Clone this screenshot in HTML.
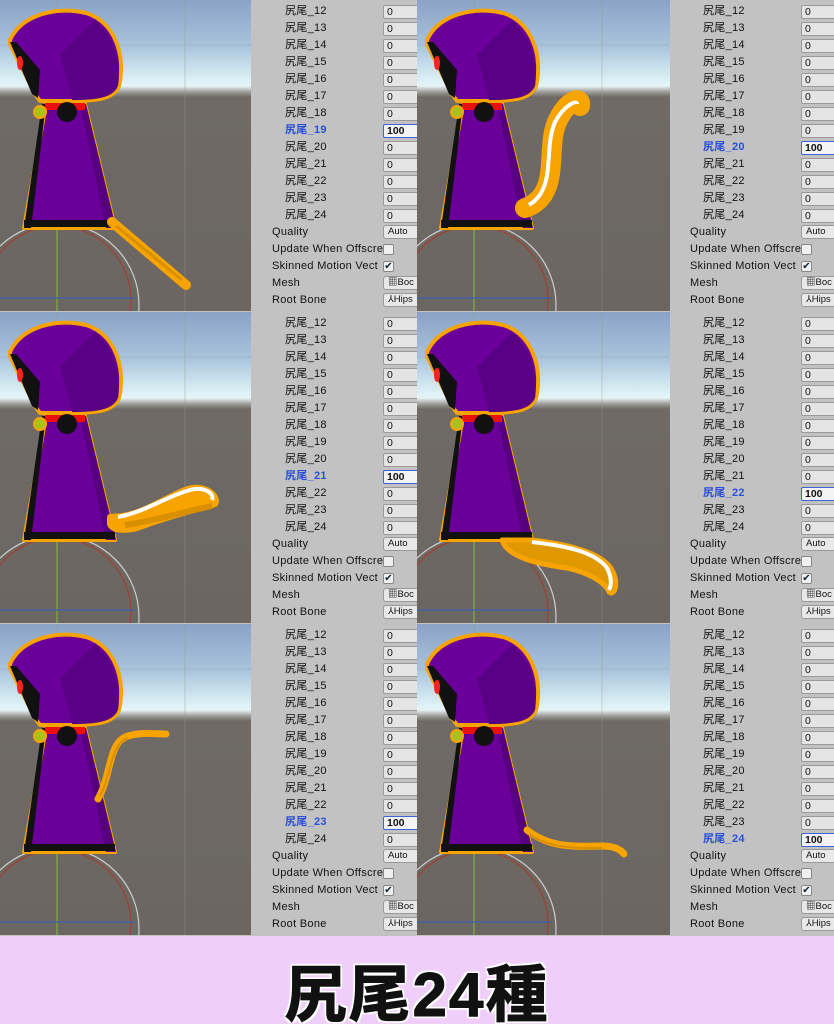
<!DOCTYPE html>
<html><head><meta charset="utf-8"><style>
*{margin:0;padding:0;box-sizing:border-box}
html,body{width:834px;height:1024px;overflow:hidden}
body{position:relative;background:#c2c2c2;font-family:"Liberation Sans","Noto Sans CJK JP",sans-serif}
.vp{position:absolute;overflow:hidden;background:linear-gradient(#8aa2c6 0px,#a9c2db 45px,#d8eef4 78px,#e6f4f6 86px,#9e9c98 92px,#6f6a66 97px,#6b6662 312px)}
.vp svg{position:absolute;left:0;top:0}
.ins{position:absolute;background:#c2c2c2;overflow:hidden;font-size:11px;color:#111}
.r{position:absolute;height:17px;line-height:17px;white-space:nowrap;letter-spacing:.3px}
.l{left:33px}.q{left:20px}
.b{position:absolute;left:131px;width:40px;height:14px;background:#e4e4e4;border:1px solid #9a9a9a;border-radius:2px;font-size:10.5px;line-height:12px;padding-left:3px}
.hl{color:#2b50d8;font-weight:bold}
.hb{border:1px solid #3d63d8;font-weight:bold;background:#f4f4f4}
.btn{position:absolute;left:131px;width:40px;height:14px;background:#e8e8e8;border:1px solid #999;border-radius:3px;font-size:9.5px;line-height:12px;padding-left:4px}
.cb{position:absolute;left:131px;width:11px;height:11px;background:#f0f0f0;border:1px solid #888;border-radius:2px;font-size:10px;line-height:9px;text-align:center;color:#123}
.banner{position:absolute;left:0;top:936px;width:834px;height:88px;background:#efcffa}
.banner div{position:absolute;left:0;width:834px;top:8px;text-align:center;font-size:62px;font-weight:bold;color:#111;letter-spacing:2px;-webkit-text-stroke:1px #111;text-shadow:0 0 4px #fff,2px 2px 0 #fff,-2px -2px 0 #fff,2px -2px 0 #fff,-2px 2px 0 #fff}
</style></head><body>
<svg width="0" height="0" style="position:absolute"><defs>
<g id="ch">
<line x1="57" y1="0" x2="57" y2="312" stroke="#8f9a92" stroke-width="1" opacity=".5"/>
<line x1="185" y1="0" x2="185" y2="312" stroke="#8f9a92" stroke-width="1" opacity=".4"/>
<line x1="0" y1="45" x2="252" y2="45" stroke="#8f9a92" stroke-width="1" opacity=".3"/>
<circle cx="57" cy="305" r="82" fill="none" stroke="#d0d0d0" stroke-width="1.2"/>
<circle cx="57" cy="300" r="74" fill="none" stroke="#a04030" stroke-width="1.2"/>
<line x1="57" y1="222" x2="57" y2="312" stroke="#7fb040" stroke-width="1.2"/>
<line x1="0" y1="298" x2="135" y2="298" stroke="#4060b0" stroke-width="1.2"/>
<path d="M46,104 L85,104 L115,228 L24,228 Z" fill="#6a0099" stroke="#f7a400" stroke-width="4" stroke-linejoin="round"/>
<path d="M46,104 L42,104 L24,228 L31,228 Z" fill="#111"/>
<path d="M80,104 L86,104 L116,228 L106,228 Z" fill="#56007f"/>
<rect x="24" y="220" width="91" height="7" fill="#111"/>
<path d="M10,40 C22,14 58,6 86,13 C116,22 126,58 119,86 C114,98 100,101 72,101 L40,101 L35,94 L10,44 Z" fill="#6a0099" stroke="#f7a400" stroke-width="4" stroke-linejoin="round"/>
<path d="M60,55 L95,20 C112,35 122,60 118,86 C113,97 100,100 72,100 Z" fill="#5a0086"/>
<path d="M10,42 L16,42 L40,70 L38,98 L32,94 Z" fill="#111"/>
<ellipse cx="20" cy="63" rx="3" ry="7" fill="#ff2020"/>
<rect x="45" y="103" width="40" height="7" fill="#e81010"/>
<circle cx="67" cy="112" r="10" fill="#111"/>
<circle cx="40" cy="112" r="6" fill="#a8c020" stroke="#f7a400" stroke-width="2"/>
</g>
</defs></svg>

<div class="vp" style="left:0;top:0;width:251px;height:311px"><svg width="251" height="312"><use href="#ch"/><path d="M112,222 L186,285" stroke="#f7a400" stroke-width="10" stroke-linecap="round"/><path d="M116,226 L182,280" stroke="#d89000" stroke-width="3"/></svg></div>
<div class="vp" style="left:417px;top:0;width:253px;height:311px"><svg width="253" height="312"><use href="#ch"/><path d="M108,208 C145,195 128,150 140,122 C150,100 165,95 163,106" fill="none" stroke="#f7a400" stroke-width="20" stroke-linecap="round"/><path d="M112,205 C140,188 126,150 138,122 C148,104 160,100 160,104" fill="none" stroke="#fff" stroke-width="4"/></svg></div>
<div class="vp" style="left:0;top:312px;width:251px;height:311px"><svg width="251" height="312"><use href="#ch"/><path d="M110,205 C140,205 160,188 185,178 C205,170 220,185 215,192 C195,198 165,205 140,215 C125,220 112,218 110,212 Z" fill="#f7a400" stroke="#f7a400" stroke-width="6" stroke-linejoin="round"/><path d="M118,205 C145,200 165,185 190,178 C205,174 215,182 212,188" fill="none" stroke="#fff" stroke-width="4"/><path d="M125,213 C160,208 190,198 212,194" fill="none" stroke="#d89000" stroke-width="6"/></svg></div>
<div class="vp" style="left:417px;top:312px;width:253px;height:311px"><svg width="253" height="312"><use href="#ch"/><path d="M85,228 C90,245 120,252 150,256 C170,260 188,270 192,280 C198,285 202,270 195,258 C185,240 150,232 115,228 Z" fill="#e09800" stroke="#f7a400" stroke-width="5" stroke-linejoin="round"/><path d="M115,230 C150,234 178,240 190,256 C194,264 195,272 192,278" fill="none" stroke="#fff" stroke-width="4"/></svg></div>
<div class="vp" style="left:0;top:624px;width:251px;height:311px"><svg width="251" height="312"><use href="#ch"/><path d="M98,175 C112,150 108,118 128,112 C140,108 155,110 166,110" fill="none" stroke="#f7a400" stroke-width="7" stroke-linecap="round"/><path d="M100,172 C112,150 110,120 128,114" fill="none" stroke="#d89000" stroke-width="2"/></svg></div>
<div class="vp" style="left:417px;top:624px;width:253px;height:311px"><svg width="253" height="312"><use href="#ch"/><path d="M110,206 C135,226 165,222 185,222 C198,222 204,226 207,230" fill="none" stroke="#f7a400" stroke-width="7" stroke-linecap="round"/><path d="M112,210 C135,226 165,224 185,224" fill="none" stroke="#d89000" stroke-width="2"/></svg></div>

<div class="ins" id="i1" style="left:252px;top:0;width:165px;height:312px"></div>
<div class="ins" id="i2" style="left:670px;top:0;width:164px;height:312px"></div>
<div class="ins" id="i3" style="left:252px;top:312px;width:165px;height:312px"></div>
<div class="ins" id="i4" style="left:670px;top:312px;width:164px;height:312px"></div>
<div class="ins" id="i5" style="left:252px;top:624px;width:165px;height:312px"></div>
<div class="ins" id="i6" style="left:670px;top:624px;width:164px;height:312px"></div>

<div class="banner"><div>尻尾24種</div></div>
<script>
var hs=[19,20,21,22,23,24];
for(var p=0;p<6;p++){
 var h='',y=3;
 for(var n=12;n<=24;n++){
  var on=n==hs[p];
  h+='<div class="r l'+(on?' hl':'')+'" style="top:'+y+'px">尻尾_'+n+'</div><div class="b'+(on?' hb':'')+'" style="top:'+(y+2)+'px">'+(on?'100':'0')+'</div>';
  y+=17;
 }
 h+='<div class="r q" style="top:'+y+'px">Quality</div><div class="btn" style="top:'+(y+1)+'px">Auto</div>';y+=17;
 h+='<div class="r q" style="top:'+y+'px">Update When Offscre</div><div class="cb" style="top:'+(y+3)+'px"></div>';y+=17;
 h+='<div class="r q" style="top:'+y+'px">Skinned Motion Vect</div><div class="cb" style="top:'+(y+3)+'px">✔</div>';y+=17;
 h+='<div class="r q" style="top:'+y+'px">Mesh</div><div class="btn" style="top:'+(y+1)+'px">▦Boc</div>';y+=17;
 h+='<div class="r q" style="top:'+y+'px">Root Bone</div><div class="btn" style="top:'+(y+1)+'px">⅄Hips</div>';
 document.getElementById('i'+(p+1)).innerHTML=h;
}
</script>
</body></html>
